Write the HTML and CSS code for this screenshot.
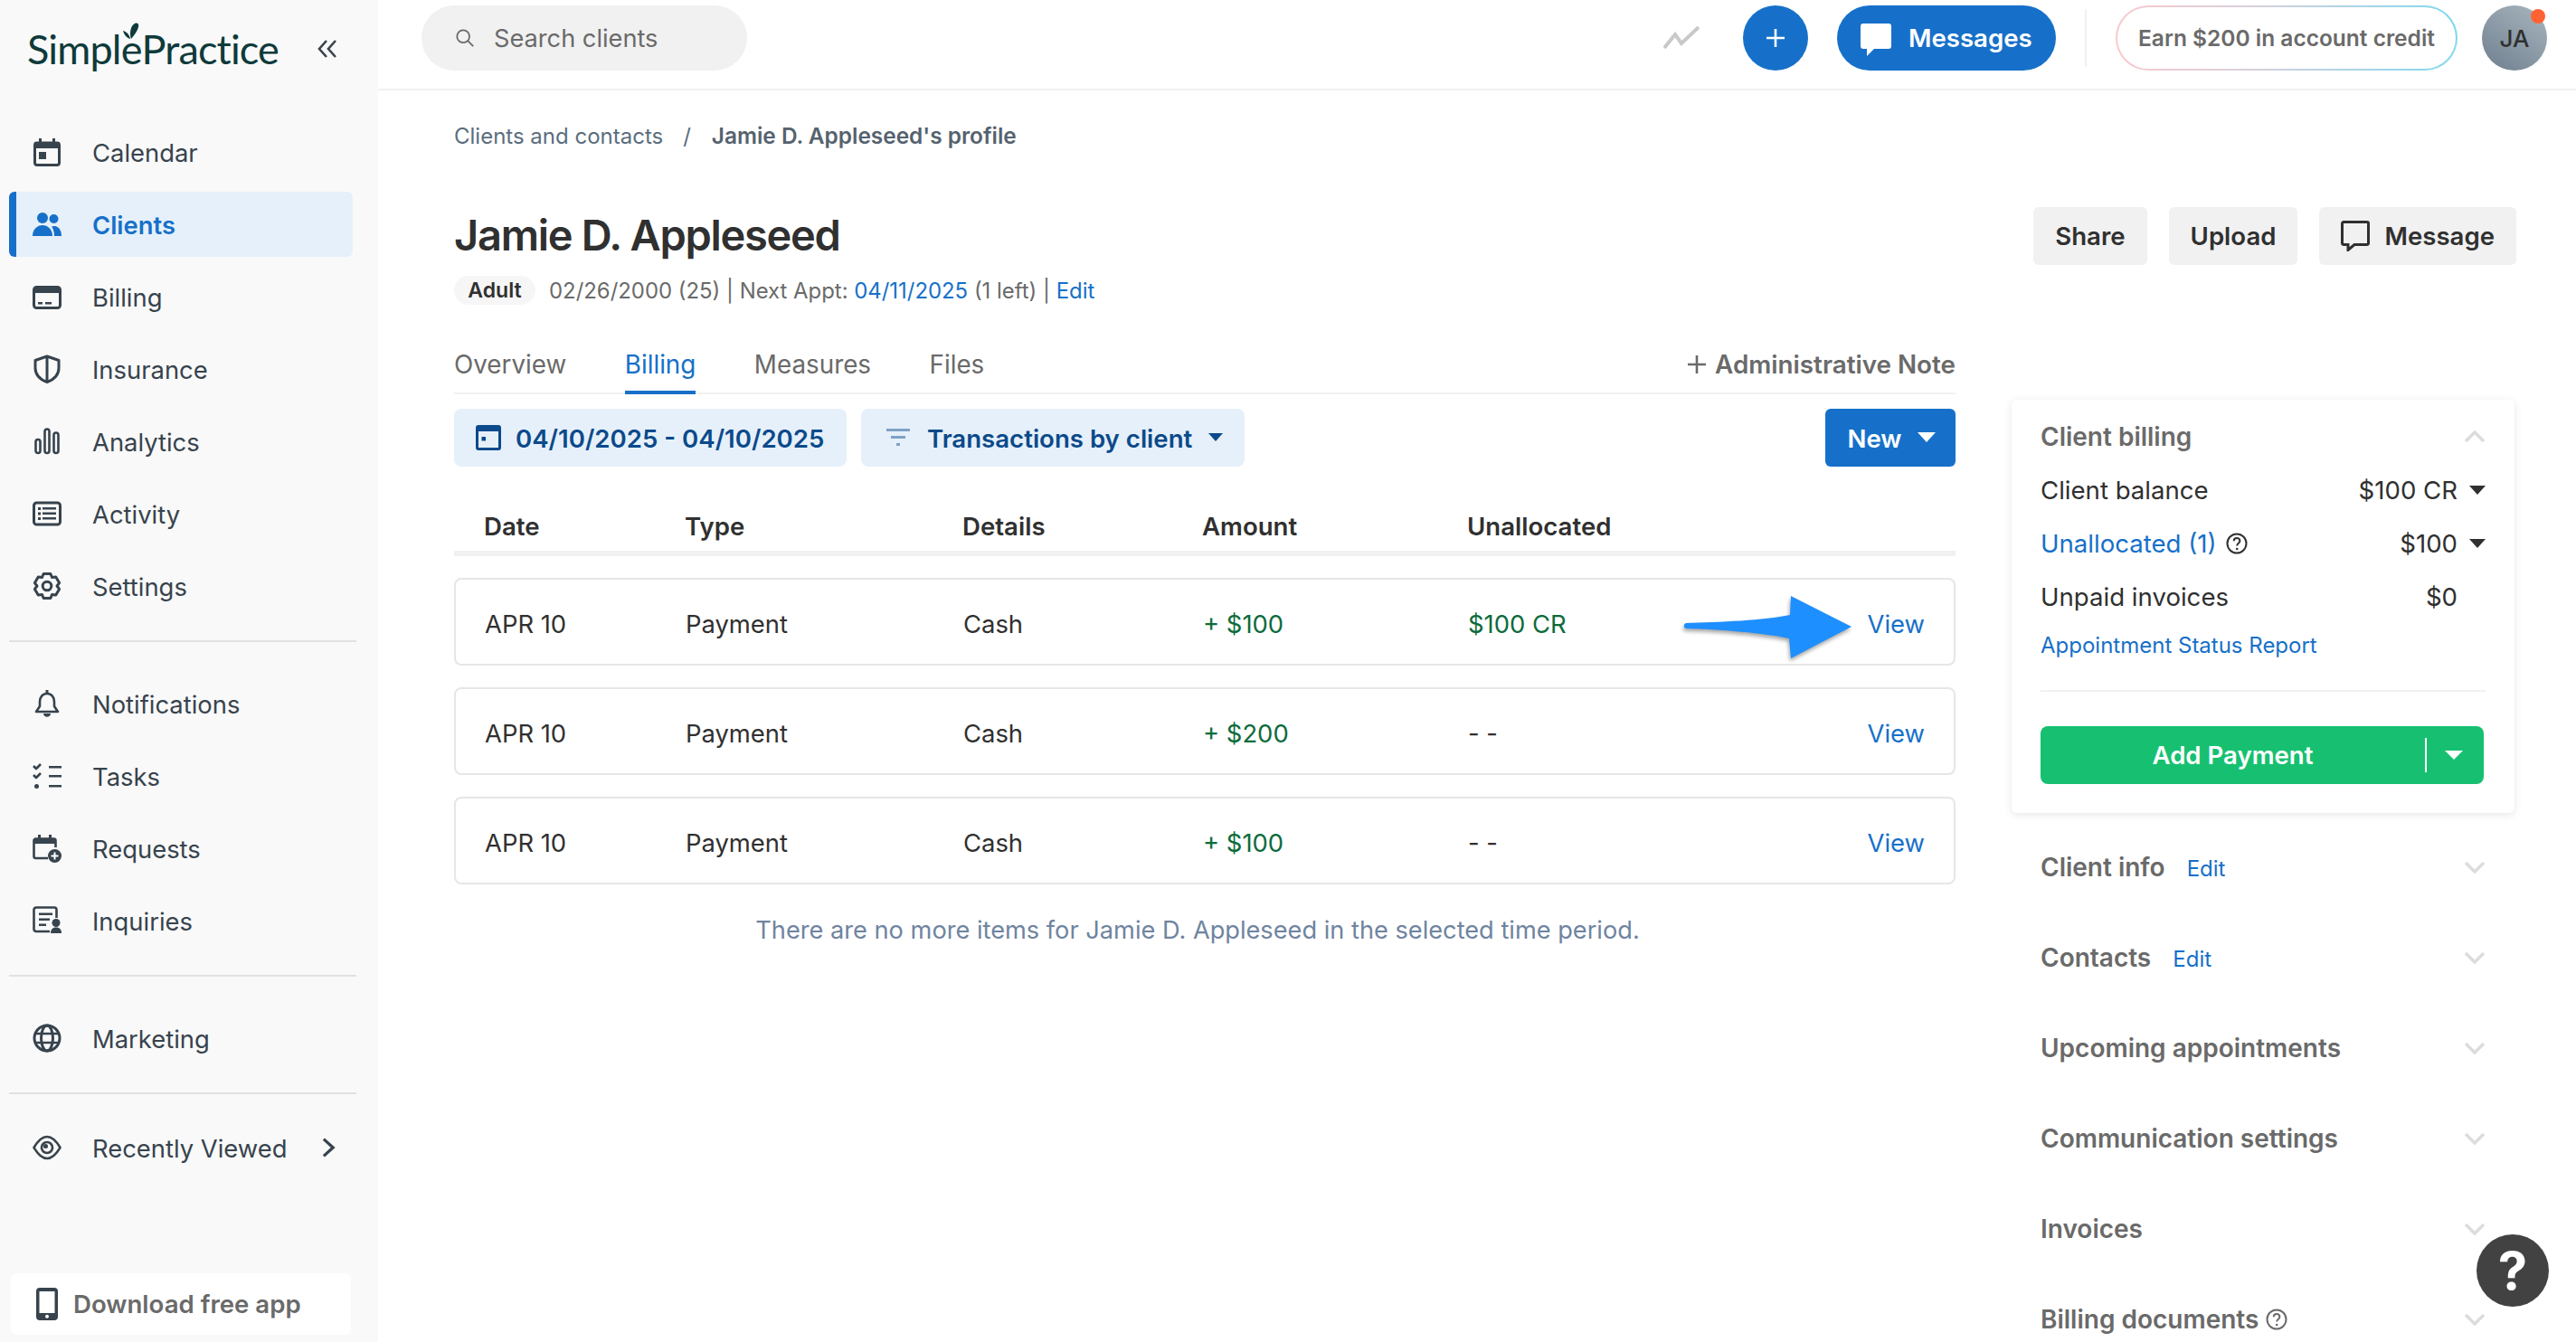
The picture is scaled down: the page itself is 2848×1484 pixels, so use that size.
FILE: index.html
```html
<!DOCTYPE html>
<html lang="en">
<head>
<meta charset="utf-8">
<title>Jamie D. Appleseed - SimplePractice</title>
<link rel="stylesheet" href="styles.css">
</head>
<body>
<aside class="sidebar">
  <div class="brand">
    <div class="logo">Simpl<span class="logo-e">e<svg class="leaf" viewBox="0 0 20 20"><path d="M10 19C8 13 9 5 14 2c3-1.500 5 1 4 4-1 4-4 8-8 13z"/><path d="M9 19C5 18 2 14 1 10c4 1 7 4 8 9z"/></svg></span>Practice</div>
    <svg class="collapse" viewBox="0 0 24 24"><path d="M11 3 3 12l8 9M21 3l-8 9 8 9"/></svg>
  </div>
  <nav class="nav-group">
    <a class="nav-item"><svg class="ic" viewBox="0 0 32 32"><rect class="s" x="2.500" y="6" width="27" height="24.500" rx="2.500"/><path class="f" d="M2 5h28v7H2zM7 1h3v5H7zM22 1h3v5h-3zM7 16h8v8H7z"/></svg>Calendar</a>
    <a class="nav-item active"><svg class="ic" viewBox="0 0 32 32"><g class="fb"><circle cx="11" cy="9" r="6"/><circle cx="23.500" cy="10" r="5"/><path d="M0 29c0-7 5-12 11-12s11 5 11 12z"/><path d="M24 29h8c0-6-3-11-8-11-1 0-2 .2-3 .6 2 2.500 3 6 3 10.400z"/></g></svg>Clients</a>
    <a class="nav-item"><svg class="ic" viewBox="0 0 32 32"><rect class="s" x="1.500" y="5.500" width="29" height="23" rx="3"/><path class="f" d="M2 5h28v7H2zM6 22h5v2.500H6zM14 22h7v2.500h-7z"/></svg>Billing</a>
    <a class="nav-item"><svg class="ic" viewBox="0 0 32 32"><path class="s" d="M16 2 29 6.500V15c0 7-5 12.500-13 15.500C8 27.500 3 22 3 15V6.500zM16 2v28"/></svg>Insurance</a>
    <a class="nav-item"><svg class="ic" viewBox="0 0 32 32"><g class="s thin"><rect x="3.500" y="14" width="5" height="15" rx="2.500"/><rect x="13.500" y="2.500" width="5" height="26.500" rx="2.500"/><rect x="23.500" y="6.500" width="5" height="22.500" rx="2.500"/></g></svg>Analytics</a>
    <a class="nav-item"><svg class="ic" viewBox="0 0 32 32"><rect class="s" x="1.500" y="4" width="29" height="24" rx="3"/><path class="f" d="M6 9h3v3H6zM6 14.500h3v3H6zM6 20h3v3H6zM11 9h15v2.500H11zM11 14.500h15V17H11zM11 20h15v2.500H11z"/></svg>Activity</a>
    <a class="nav-item"><svg class="ic" viewBox="0 0 32 32"><path class="s" d="M12.140 2.540H19.860L21.500 6.470 25.730 5.930 29.580 12.610 27 16 29.580 19.390 25.730 26.070 21.500 25.530 19.860 29.460H12.140L10.500 25.530 6.270 26.070 2.420 19.390 5 16 2.420 12.610 6.270 5.930 10.500 6.470z"/><circle class="s" cx="16" cy="16" r="4.800"/></svg>Settings</a>
  </nav>
  <div class="nav-rule"></div>
  <nav class="nav-group">
    <a class="nav-item"><svg class="ic" viewBox="0 0 32 32"><path class="s thin" d="M16 5c-5 0-8 4-8 9v5l-4 6h24l-4-6v-5c0-5-3-9-8-9z"/><path class="f" d="M14.500 1h3v5h-3zM12 27h8c0 5-8 5-8 0z"/></svg>Notifications</a>
    <a class="nav-item"><svg class="ic" viewBox="0 0 32 32"><path class="f" d="M18 5h14v2.500H18zM18 15h14v2.500H18zM18 26h14v2.500H18z"/><circle class="f" cx="4.500" cy="27.500" r="2.500"/><path class="s thin" d="M1 5l3 3 5-5M1 15l3 3 5-5"/></svg>Tasks</a>
    <a class="nav-item"><svg class="ic" viewBox="0 0 32 32"><path class="s thin" d="M17 27H3.500a2 2 0 0 1-2-2V7.500a2 2 0 0 1 2-2h20a2 2 0 0 1 2 2V15"/><path class="f" d="M2 5h24v6H2zM6 1h3v5H6zM18 1h3v5h-3z"/><circle class="f" cx="24.500" cy="24.500" r="7.500"/><path class="wl" d="M24.500 20.500v8M20.500 24.500h8"/></svg>Requests</a>
    <a class="nav-item"><svg class="ic" viewBox="0 0 32 32"><path class="s thin" d="M19 28H4a2.500 2.500 0 0 1-2.500-2.500V4A2.500 2.500 0 0 1 4 1.500h20A2.500 2.500 0 0 1 26.500 4v9"/><path class="f" d="M7 7.500h15V10H7zM7 13.500h12V16H7zM7 19.500h8V22H7z"/><circle class="f" cx="26" cy="18.500" r="4.500"/><path class="f" d="M20 30c0-4 2-6.500 6-6.500s6 2.500 6 6.500z"/></svg>Inquiries</a>
  </nav>
  <div class="nav-rule"></div>
  <nav class="nav-group">
    <a class="nav-item"><svg class="ic" viewBox="0 0 32 32"><g class="s"><circle cx="16" cy="16" r="14"/><ellipse cx="16" cy="16" rx="6.500" ry="14"/><path class="thin" d="M3 11h26M3 21h26"/></g></svg>Marketing</a>
  </nav>
  <div class="nav-rule"></div>
  <nav class="nav-group tight">
    <a class="nav-item"><svg class="ic" viewBox="0 0 32 32"><path class="s thin" d="M1.500 16C5 10 10 4 16 4s11 6 14.500 12C27 22 22 28 16 28S5 22 1.500 16z"/><circle class="s thin" cx="16" cy="16" r="6"/><circle class="f" cx="14.500" cy="14.500" r="2.500"/></svg><span class="nav-label">Recently Viewed</span><svg class="nav-chev" viewBox="0 0 16 24"><path d="M2 2l11 10L2 22"/></svg></a>
  </nav>
  <a class="download"><svg class="phone" viewBox="0 0 24 36"><path class="f" d="M4 0h16a4 4 0 0 1 4 4v28a4 4 0 0 1-4 4H4a4 4 0 0 1-4-4V4a4 4 0 0 1 4-4z"/><rect class="bg" x="3.500" y="4" width="17" height="24"/><circle class="bg" cx="12" cy="31.800" r="2"/></svg>Download free app</a>
</aside>

<div class="workspace">
  <header class="topbar">
    <div class="search"><svg class="search-ic" viewBox="0 0 24 24"><circle cx="10" cy="10" r="7.500"/><path d="M15.500 15.500 22 22"/></svg><span>Search clients</span></div>
    <div class="top-actions">
      <svg class="trend" viewBox="0 0 40 26"><path d="M1 24 13 9l7 10L39 1"/></svg>
      <button class="round-add"><svg viewBox="0 0 24 24"><path d="M12 2v20M2 12h20"/></svg></button>
      <button class="messages"><svg viewBox="0 0 34 36"><path d="M3 0h28a3 3 0 0 1 3 3v22a3 3 0 0 1-3 3H15L7 36v-8H3a3 3 0 0 1-3-3V3a3 3 0 0 1 3-3z"/></svg>Messages</button>
      <div class="top-rule"></div>
      <a class="earn"><span>Earn $200 in account credit</span></a>
      <div class="avatar">JA<span class="dot"></span></div>
    </div>
  </header>

  <main class="page">
    <div class="crumbs"><span>Clients and contacts</span><span class="crumb-sep">/</span><strong>Jamie D. Appleseed's profile</strong></div>

    <section class="profile-head">
      <div>
        <h1>Jamie D. Appleseed</h1>
        <p class="sub"><span class="badge">Adult</span><span>02/26/2000 (25) | Next Appt: <a class="link">04/11/2025</a> (1 left) | <a class="link">Edit</a></span></p>
      </div>
      <div class="head-btns">
        <button class="grey-btn">Share</button>
        <button class="grey-btn">Upload</button>
        <button class="grey-btn"><svg viewBox="0 0 32 34"><path d="M3 1.500h26a1.500 1.500 0 0 1 1.500 1.500v22a1.500 1.500 0 0 1-1.500 1.500H15L8 32.500v-6H3A1.500 1.500 0 0 1 1.500 25V3A1.500 1.500 0 0 1 3 1.500z"/></svg>Message</button>
      </div>
    </section>

    <div class="columns">
      <section class="billing">
        <div class="tabs">
          <a class="tab">Overview</a>
          <a class="tab on">Billing</a>
          <a class="tab">Measures</a>
          <a class="tab">Files</a>
          <a class="admin-note"><svg viewBox="0 0 24 24"><path d="M12 2v20M2 12h20"/></svg>Administrative Note</a>
        </div>
        <div class="toolbar">
          <button class="pale-btn date-btn"><svg viewBox="0 0 28 28"><path d="M3 0h22a3 3 0 0 1 3 3v22a3 3 0 0 1-3 3H3a3 3 0 0 1-3-3V3a3 3 0 0 1 3-3z"/><rect class="hole" x="3" y="7" width="22" height="18"/><rect x="6.500" y="13" width="4.500" height="4.500"/></svg>04/10/2025 - 04/10/2025</button>
          <button class="pale-btn filter-btn"><svg viewBox="0 0 26 22"><path d="M0 1h26v3H0zM5 9h16v3H5zM11 17h4v3h-4z"/></svg>Transactions by client<i class="caret"></i></button>
          <button class="new-btn">New<i class="caret"></i></button>
        </div>
        <div class="grid-row table-head"><span>Date</span><span>Type</span><span>Details</span><span>Amount</span><span>Unallocated</span></div>
        <div class="grid-row pay-row"><span>APR 10</span><span>Payment</span><span>Cash</span><span class="green">+ $100</span><span class="green">$100 CR</span><a class="link view">View</a>
          <svg class="arrow" viewBox="0 0 190 72"><path d="M3 31C40 30 90 28 118 22L119 1l67 34-67 35-2-22C90 42 40 38 3 37c-3-1-3-5 0-6z"/></svg>
        </div>
        <div class="grid-row pay-row"><span>APR 10</span><span>Payment</span><span>Cash</span><span class="green">+ $200</span><span>- -</span><a class="link view">View</a></div>
        <div class="grid-row pay-row"><span>APR 10</span><span>Payment</span><span>Cash</span><span class="green">+ $100</span><span>- -</span><a class="link view">View</a></div>
        <p class="empty-note">There are no more items for Jamie D. Appleseed in the selected time period.</p>
      </section>

      <aside class="rail">
        <div class="card">
          <div class="card-head"><h3>Client billing</h3><svg class="chev" viewBox="0 0 24 14"><path d="M2 12 12 2l10 10"/></svg></div>
          <div class="bal-row"><span>Client balance</span><span class="bal-val">$100 CR<i class="caret dark"></i></span></div>
          <div class="bal-row"><span class="unalloc"><a class="link">Unallocated (1)</a><svg class="help-ic" viewBox="0 0 24 24"><circle cx="12" cy="12" r="10.500"/><path d="M8.800 9.200c0-4.200 6.600-4.200 6.600 0 0 2.600-3.200 2.600-3.200 5.200"/><circle class="dotfill" cx="12.200" cy="18" r="1.300"/></svg></span><span class="bal-val">$100<i class="caret dark"></i></span></div>
          <div class="bal-row"><span>Unpaid invoices</span><span class="bal-val">$0<i class="caret none"></i></span></div>
          <a class="link report">Appointment Status Report</a>
          <div class="card-rule"></div>
          <button class="pay-btn"><span class="pay-label">Add Payment</span><span class="pay-split"></span><i class="caret"></i></button>
        </div>
        <div class="acc"><h3>Client info</h3><a class="link acc-edit">Edit</a><svg class="chev" viewBox="0 0 24 14"><path d="M2 2l10 10L22 2"/></svg></div>
        <div class="acc"><h3>Contacts</h3><a class="link acc-edit">Edit</a><svg class="chev" viewBox="0 0 24 14"><path d="M2 2l10 10L22 2"/></svg></div>
        <div class="acc"><h3>Upcoming appointments</h3><svg class="chev" viewBox="0 0 24 14"><path d="M2 2l10 10L22 2"/></svg></div>
        <div class="acc"><h3>Communication settings</h3><svg class="chev" viewBox="0 0 24 14"><path d="M2 2l10 10L22 2"/></svg></div>
        <div class="acc"><h3>Invoices</h3><svg class="chev" viewBox="0 0 24 14"><path d="M2 2l10 10L22 2"/></svg></div>
        <div class="acc"><h3>Billing documents</h3><svg class="help-ic grey" viewBox="0 0 24 24"><circle cx="12" cy="12" r="10.500"/><path d="M8.800 9.200c0-4.200 6.600-4.200 6.600 0 0 2.600-3.200 2.600-3.200 5.200"/><circle class="dotfill" cx="12.200" cy="18" r="1.300"/></svg><svg class="chev" viewBox="0 0 24 14"><path d="M2 2l10 10L22 2"/></svg></div>
      </aside>
    </div>
  </main>
</div>
<button class="help-fab">?</button>
</body>
</html>
```
FILE: styles.css
```css
*{box-sizing:border-box}
html,body{margin:0;padding:0;height:1484px;overflow:hidden}
body{display:flex;width:2848px;font-family:Inter,"Noto Sans",sans-serif;font-size:27.6px;color:#303030;background:#fff}
button{font:inherit;border:0;cursor:pointer}
h1,h3,p{margin:0}
.sidebar{width:418px;flex:none;height:1484px;background:#f9f9f9;display:flex;flex-direction:column;padding-bottom:8px}
.brand{height:132px;flex:none;display:flex;align-items:flex-start;padding:28px 0 0 30px;position:relative}
.logo{font-family:Lato,sans-serif;font-size:45px;line-height:52px;color:#0f3a3b;letter-spacing:-.85px;white-space:nowrap}
.logo-e{position:relative}
.leaf{position:absolute;left:1px;top:-3px;width:20px;height:20px;fill:#0f3a3b}
.collapse{position:absolute;left:350px;top:42px;width:24px;height:24px;fill:none;stroke:#37434d;stroke-width:2.600}
.nav-group{display:flex;flex-direction:column;gap:8px;margin-top:32px}
.brand + .nav-group{margin-top:0}
.nav-group.tight{margin-top:23px}
.nav-item{height:72px;margin-left:10px;width:380px;border-left:8px solid transparent;border-radius:6px;padding:2px 0 0 18px;display:flex;align-items:center;gap:34px;font-size:27.4px;color:#37434d;white-space:nowrap}
.nav-item.active{background:#e6f0fa;border-left-color:#1670c9;color:#1670c9;font-weight:600}
.ic{width:32px;height:32px;flex:none;overflow:visible;margin-top:-2px}
.s{fill:none;stroke:#37434d;stroke-width:3;stroke-linejoin:round}
.thin,.thin *{stroke-width:2.600}
.f{fill:#37434d}
.fb{fill:#1670c9}
.wl{stroke:#fff;stroke-width:2;fill:none}
.bg{fill:#fff}
.nav-rule{height:2px;width:384px;margin:24px 0 0 10px;background:#e1e1e1;flex:none}
.nav-label{width:220px;flex:none}
.nav-chev{width:15px;height:24px;flex:none;margin-top:-2px;fill:none;stroke:#37434d;stroke-width:3.500}
.download{margin:auto 0 0 12px;width:376px;height:68px;flex:none;background:#fff;border-radius:6px;display:flex;align-items:center;gap:17px;padding-left:28px;font-size:27.6px;font-weight:600;color:#6a6a6a}
.phone{width:24px;height:36px;flex:none}
.workspace{flex:1;min-width:0;display:flex;flex-direction:column}
.topbar{height:100px;flex:none;border-bottom:2px solid #f1f1f1;display:flex;align-items:flex-start;justify-content:space-between;padding:6px 32px 0 48px}
.search{width:360px;height:72px;border-radius:36px;background:#f1f1f1;display:flex;align-items:center;padding-left:37px;gap:21px;color:#6a6a6a;font-size:27.2px}
.search-ic{width:22px;height:22px;fill:none;stroke:#6a6a6a;stroke-width:2}
.top-actions{display:flex;align-items:center;height:72px}
.trend{width:40px;height:26px;margin-right:48px;fill:none;stroke:#c9c9c9;stroke-width:4}
.round-add{width:72px;height:72px;border-radius:50%;background:#1670c9;display:flex;align-items:center;justify-content:center}
.round-add svg{width:24px;height:24px;fill:none;stroke:#fff;stroke-width:2.600}
.messages{margin-left:32px;width:242px;height:72px;border-radius:36px;background:#1670c9;color:#fff;font-weight:600;display:flex;align-items:center;padding-left:26px;gap:19px}
.messages svg{width:34px;height:36px;fill:#fff;flex:none;margin-top:4px}
.top-rule{width:2px;height:64px;background:#f1f1f1;margin:0 32px}
.earn{width:378px;height:72px;border-radius:36px;padding:2px;background:linear-gradient(90deg,#f9c9cd,#d8d0dc 40%,#7fd8ef);display:flex}
.earn span{flex:1;border-radius:34px;background:#fff;display:flex;align-items:center;justify-content:center;font-size:24.5px;font-weight:600;color:#6a6a6a}
.avatar{position:relative;width:72px;height:72px;margin-left:27px;border-radius:50%;background:linear-gradient(35deg,#6e7f8e,#a9b6bf);display:flex;align-items:center;justify-content:center;font-size:26px;font-weight:500;color:#303030}
.dot{position:absolute;right:2px;top:4px;width:16px;height:16px;border-radius:50%;background:#ff6332}
.page{padding:30px 66px 0 84px}
.crumbs{height:40px;display:flex;align-items:center;font-size:24px;color:#5a6d7e;white-space:nowrap}
.crumb-sep{margin:0 23px 0 22px}
.crumbs strong{font-weight:600;color:#55626e;font-size:24.4px}
.profile-head{margin-top:59px;height:108px;display:flex;justify-content:space-between;align-items:flex-start}
h1{font-size:47px;line-height:62px;font-weight:600;letter-spacing:-1.3px;color:#303030}
.sub{margin-top:14px;height:32px;display:flex;align-items:center;gap:15px;font-size:23.9px;color:#6a6a6a;white-space:nowrap}
.badge{width:90px;height:32px;border-radius:16px;background:#f6f6f6;display:flex;align-items:center;justify-content:center;font-weight:600;color:#303030;font-size:23px}
.link{color:#1670c9}
.head-btns{display:flex;gap:24px}
.grey-btn{height:64px;padding:0 24px;border-radius:6px;background:#f1f1f1;color:#303030;font-weight:600;display:flex;align-items:center;gap:16px}
.grey-btn svg{width:32px;height:34px;fill:none;stroke:#303030;stroke-width:3}
.columns{display:flex;gap:62px;margin-top:43px}
.billing{width:1660px;flex:none}
.tabs{height:56px;display:flex;align-items:flex-start;border-bottom:2px solid #f1f1f1;white-space:nowrap;font-size:27.8px}
.tab{height:56px;padding:5px 0 0;line-height:36px;margin-right:64.500px;color:#6a6a6a;border-bottom:4px solid transparent}
.tab.on{color:#1670c9;border-bottom-color:#1670c9;margin-bottom:-2px}
.admin-note{margin-left:auto;padding-top:5px;line-height:36px;color:#6a6a6a;font-weight:600;display:flex;align-items:center;gap:8px}
.admin-note svg{width:24px;height:24px;fill:none;stroke:#6a6a6a;stroke-width:2.600}
.toolbar{margin-top:16px;display:flex;gap:16px}
.pale-btn{height:64px;border-radius:8px;background:#e6f0fa;color:#0b4a8b;font-weight:600;display:flex;align-items:center;white-space:nowrap;padding-top:2px}
.date-btn{width:434px;padding-left:24px;gap:16px}
.date-btn svg{width:28px;height:28px;fill:#0b4a8b;margin-top:-2px}
.date-btn .hole{fill:#e6f0fa}
.filter-btn{width:424px;padding-left:28px;gap:19px}
.filter-btn svg{width:26px;height:22px;fill:#7fa2c6;margin-top:-2px}
.caret{display:inline-block;width:0;height:0;border-left:8px solid transparent;border-right:8px solid transparent;border-top:9px solid #0b4a8b}
.filter-btn .caret{margin-left:-1px;margin-top:-2px}
.new-btn{margin-left:auto;width:144px;height:64px;border-radius:6px;background:#1670c9;color:#fff;font-weight:600;display:flex;align-items:center;justify-content:center;gap:17px;padding:2px 0 0 2px}
.new-btn .caret{border-top-color:#fff;border-left-width:10px;border-right-width:10px;border-top-width:11px;margin-top:-4px}
.grid-row{display:grid;grid-template-columns:222px 307px 265px 293px 1fr auto;align-items:center;padding:0 34px 0 33px;position:relative}
.table-head{height:99px;padding-top:46px;padding-bottom:7px;border-bottom:6px solid #f1f1f1;font-weight:600}
.pay-row{height:97px;margin-top:24px;border:2px solid #e6e6e6;border-radius:8px;padding:5px 32px 0;color:#303030;font-size:27.4px}
.green{color:#0d6b3c}
.view{justify-self:end}
.arrow{position:absolute;left:1357px;top:17px;width:190px;height:72px;fill:#1e8fff;filter:drop-shadow(-1px 3px 2px rgba(0,0,0,.35))}
.empty-note{margin:33px 0 0;padding-right:16px;text-align:center;line-height:36px;color:#6f84a0;font-size:27.2px}
.rail{width:556px;flex:none;margin-top:62px}
.card{height:457px;border-radius:6px;padding:21px 32px 0;background:#fff;box-shadow:0 2px 10px rgba(0,0,0,.1)}
.card-head{height:40px;display:flex;align-items:center;justify-content:space-between;margin-bottom:9px}
h3{font-size:28px;font-weight:600;color:#6a6a6a;white-space:nowrap}
.chev{width:24px;height:14px;fill:none;stroke:#dcdcdc;stroke-width:3.500;flex:none}
.bal-row{height:59px;display:flex;align-items:center;justify-content:space-between}
.bal-val{display:flex;align-items:center;gap:13px}
.caret.dark{border-top-color:#303030;border-left-width:9px;border-right-width:9px;border-top-width:10px}
.caret.none{border-color:transparent;border-left-width:9px;border-right-width:9px;border-top-width:10px}
.unalloc{display:flex;align-items:center;gap:10px}
.help-ic{width:24px;height:24px;fill:none;stroke:#303030;stroke-width:2;flex:none}
.help-ic .dotfill{fill:#303030;stroke:none}
.help-ic.grey{stroke:#6a6a6a;margin-left:8px}
.help-ic.grey .dotfill{fill:#6a6a6a}
.report{display:block;margin-top:5px;line-height:40px;font-size:24px}
.card-rule{height:2px;background:#f1f1f1;margin:29px 0 38px}
.pay-btn{width:490px;height:64px;border-radius:8px;background:#17c071;color:#fff;font-weight:600;display:flex;align-items:center;padding:0}
.pay-label{width:425px;text-align:center}
.pay-split{width:2px;height:38px;background:#fff}
.pay-btn .caret{margin-left:20px;border-top-color:#fff;border-left-width:10px;border-right-width:10px;border-top-width:10px}
.acc{height:100px;padding:0 32px;display:flex;align-items:center}
.card + .acc{margin-top:10px}
.acc .chev{margin-left:auto}
.acc-edit{font-size:24px;margin-left:24px;margin-top:3px}
.help-fab{position:absolute;left:2738px;top:1365px;width:80px;height:80px;border-radius:50%;background:#424242;color:#fff;font-size:58px;font-weight:700;line-height:80px;padding:0;text-align:center}
```
